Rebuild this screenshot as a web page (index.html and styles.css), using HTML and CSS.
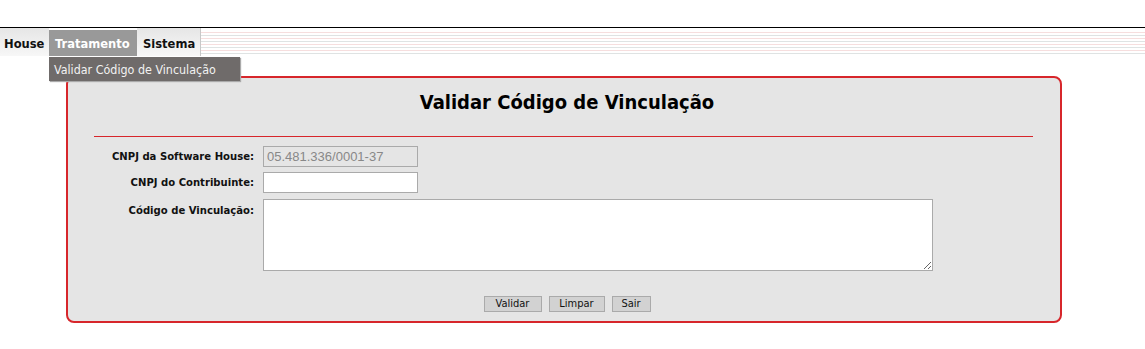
FILE: index.html
```html
<!DOCTYPE html>
<html lang="pt-BR">
<head>
<meta charset="utf-8">
<title>Validar Código de Vinculação</title>
<link rel="stylesheet" href="styles.css">
</head>
<body>
<div class="topbar"></div>
<nav class="menu">
  <a class="tab">House</a>
  <a class="tab tab-active">Tratamento</a>
  <a class="tab tab-last">Sistema</a>
  <div class="stripes"></div>
  <div class="dropdown">Validar Código de Vinculação</div>
</nav>
<main class="panel">
  <h1 class="title">Validar Código de Vinculação</h1>
  <hr class="rule">
  <form class="form">
    <label class="label">CNPJ da Software House:</label>
    <input class="field field-disabled" type="text" value="05.481.336/0001-37" disabled>
    <label class="label">CNPJ do Contribuinte:</label>
    <input class="field" type="text">
    <label class="label label-top">Código de Vinculação:</label>
    <textarea class="area"></textarea>
  </form>
  <div class="actions">
    <button class="btn btn-validar" type="button">Validar</button>
    <button class="btn btn-limpar" type="button">Limpar</button>
    <button class="btn btn-sair" type="button">Sair</button>
  </div>
</main>
</body>
</html>
```
FILE: styles.css
```css
* { box-sizing: border-box; }
html, body { margin: 0; padding: 0; background: #fff; }
body { font-family: "DejaVu Sans Condensed", "Liberation Sans", sans-serif; color: #000; }

.topbar { height: 28px; border-bottom: 1px solid #000; }

.menu { position: relative; display: flex; height: 28px; }
.tab {
  font-weight: bold; font-size: 12.8px; line-height: 26px; height: 28px;
  padding: 3px 4px 0 4px; color: #111;
  background: linear-gradient(#e6e6e6, #f7f7f7);
}
.tab:first-child { width: 49px; }
.tab-active { background: #999; color: #fff; margin-top: 2px; height: 26px; padding-top: 1px; width: 88px; padding-left: 6px; }
.tab-last { width: 64px; border-right: 1px solid #c8c8c8; padding-left: 6px; }
.stripes {
  flex: 1; margin-top: 2px; height: 26px;
  background: repeating-linear-gradient(#fff 0 2px, #f6dede 2px 3px, #fff 3px 5px, #dfe3e3 5px 6px);
}
.dropdown {
  position: absolute; left: 49px; top: 29px; width: 191px; height: 24px;
  background: #6f6b6a; color: #f2f2f2; font-size: 12.4px; line-height: 26px; padding-left: 5px;
  box-shadow: 1px 1px 1px #aaa;
}

.panel {
  margin: 20px 0 0 66px; width: 996px; height: 247px;
  background: #e5e5e5; border: 2px solid #d7262b; border-radius: 8px;
  padding: 0 27px 0 26px;
}
.title { margin: 0; font-size: 20px; font-weight: bold; text-align: center; line-height: 24px; padding: 12px 0 0 7px; }
.rule { margin: 22px 0 0 0; border: 0; border-top: 1px solid #d7262b; height: 0; }

.form {
  display: grid; grid-template-columns: 160px 670px; column-gap: 9px; row-gap: 5px;
  margin-top: 9px;
}
.label { font-size: 11.2px; font-weight: bold; text-align: right; align-self: center; color: #111; }
.label-top { align-self: start; padding-top: 6px; }
.field {
  width: 155px; height: 21px; border: 1px solid #aaa; background: #fff;
  font-family: "Liberation Sans", sans-serif; font-size: 13px; padding: 0 3px; margin: 0;
}
.field-disabled { background: #e5e5e5; color: #888; }
.area { width: 670px; height: 72px; border: 1px solid #aaa; background: #fff; margin: 1px 0 0 0; resize: both; }

.actions { display: flex; justify-content: center; gap: 7px; margin-top: 25px; padding-left: 7px; }
.btn {
  height: 16px; padding: 0; border: 1px solid #aaa; background: #d2d2d2;
  font-family: "DejaVu Sans Condensed", "Liberation Sans", sans-serif; font-size: 11px; line-height: 14px; color: #111;
}
.btn-validar { width: 58px; }
.btn-limpar { width: 56px; }
.btn-sair { width: 39px; }
```
